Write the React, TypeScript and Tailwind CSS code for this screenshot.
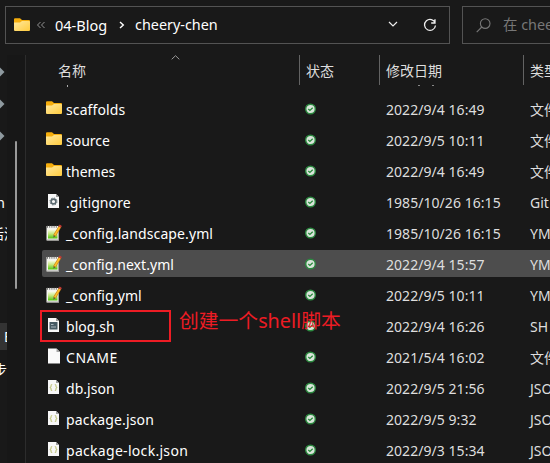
import React from "react";

type Kind = "folder" | "gear" | "note" | "shell" | "blank" | "json";

const files: [string, Kind, string, string, string?][] = [
  ["scaffolds", "folder", "2022/9/4 16:49", "文件夹", "tracking-[0.1px]"],
  ["source", "folder", "2022/9/5 10:11", "文件夹"],
  ["themes", "folder", "2022/9/4 16:49", "文件夹"],
  [".gitignore", "gear", "1985/10/26 16:15", "Git Ignore", "tracking-[0.1px]"],
  ["_config.landscape.yml", "note", "1985/10/26 16:15", "YML 文件", "tracking-[0.1px]"],
  ["_config.next.yml", "note", "2022/9/4 15:57", "YML 文件", "tracking-[0.05px]"],
  ["_config.yml", "note", "2022/9/5 10:11", "YML 文件", "tracking-[0.1px]"],
  ["blog.sh", "shell", "2022/9/4 16:26", "SH 文件", "tracking-[0.05px]"],
  ["CNAME", "blank", "2021/5/4 16:02", "文件", "tracking-[0.6px]"],
  ["db.json", "json", "2022/9/5 21:56", "JSON 文件", "tracking-[0.05px]"],
  ["package.json", "json", "2022/9/5 9:32", "JSON 文件", "tracking-[0.15px]"],
  ["package-lock.json", "json", "2022/9/3 15:34", "JSON 文件", "tracking-[0.3px]"],
];

function Folder() {
  return (
    <svg width="16" height="14" viewBox="0 0 16 14" className="block shrink-0">
      <defs>
        <linearGradient id="fold" x1="0" y1="0" x2="1" y2="1">
          <stop offset="0" stopColor="#ffe9a0" />
          <stop offset="1" stopColor="#ffcb3d" />
        </linearGradient>
      </defs>
      <path d="M0 1.2Q0 0.3 1 0.3H6L8 2H15Q16 2 16 3V8H0Z" fill="#f5ad0c" />
      <path d="M0 4.5H6L8 2.9H15Q16 2.9 16 3.7V12Q16 13 15 13H1Q0 13 0 12Z" fill="url(#fold)" />
    </svg>
  );
}

function Page({ kind }: { kind: Kind }) {
  return (
    <svg width="16" height="16" viewBox="0 0 16 16" className="block">
      {kind === "blank" ? (
        <>
          <path d="M2 0.5H10.5L14 4V15.5H2Z" fill="#fafafa" />
          <path d="M10.5 0.5V4H14Z" fill="#a5a5a5" />
        </>
      ) : (
        <>
          <path d="M2 1H10L13 4V15H2Z" fill="#f7f7f7" />
          <path d="M10 1V4H13Z" fill="#9c9c9c" />
        </>
      )}
      {kind === "gear" && (
        <>
          <circle cx="7.5" cy="8.5" r="2.4" fill="none" stroke="#5b6a70" strokeWidth="1.6" />
          <circle cx="7.5" cy="8.5" r="3.5" fill="none" stroke="#5b6a70" strokeWidth="1" strokeDasharray="1.3 1.45" />
        </>
      )}
      {kind === "shell" && (
        <>
          <rect x="3.5" y="5" width="8" height="7.5" fill="#465a64" />
          <path d="M5 7.5H7.5M5 10H10" stroke="#b5c3c9" strokeWidth="0.9" fill="none" />
        </>
      )}
      {kind === "json" && (
        <path
          d="M6.2 5.5Q5 5.5 5 6.8V7.6L4.2 8.5L5 9.4V10.2Q5 11.5 6.2 11.5M8.8 5.5Q10 5.5 10 6.8V7.6L10.8 8.5L10 9.4V10.2Q10 11.5 8.8 11.5"
          fill="none"
          stroke="#bfc47c"
          strokeWidth="1.1"
        />
      )}
    </svg>
  );
}

function Note() {
  return (
    <svg width="17" height="17" viewBox="0 0 17 17" className="block">
      <defs>
        <linearGradient id="leaf" x1="0" y1="0" x2="0" y2="1">
          <stop offset="0" stopColor="#fbfde8" />
          <stop offset="0.45" stopColor="#c5e882" />
          <stop offset="1" stopColor="#4fc40c" />
        </linearGradient>
      </defs>
      <path d="M0.5 2H13V16.5H0.5Z" fill="#f4f4ef" />
      <path d="M2 5.5H11.5V14.5H2Z" fill="url(#leaf)" />
      <path d="M1 2.8H13" stroke="#777" strokeWidth="2" strokeDasharray="1 1.2" />
      <path d="M12.5 3V16H1" stroke="#a3a3a0" strokeWidth="1" fill="none" />
      <path d="M8.3 12L14 2.5" stroke="#c78315" strokeWidth="2.8" />
      <path d="M8.6 11.5L14 2.5" stroke="#ffc12d" strokeWidth="1.5" />
      <path d="M13.7 3L14.8 1.2" stroke="#c23a36" strokeWidth="2.6" />
      <path d="M7.4 13.8L7.7 11.3L9.2 12.1Z" fill="#444" />
    </svg>
  );
}

function Status() {
  return (
    <svg width="12" height="12" viewBox="0 0 12 12" className="block">
      <circle cx="5.5" cy="6" r="4.8" fill="#d9e4da" stroke="#2c8a40" strokeWidth="1.4" />
      <path d="M3.3 6L4.9 7.4L7.7 4.8" fill="none" stroke="#278a3b" strokeWidth="1.3" />
    </svg>
  );
}

function Pin() {
  return (
    <svg width="5" height="10" viewBox="0 0 5 10" className="block">
      <path d="M0 0.5L4.5 5L0 9.5Z" fill="#8e999f" />
    </svg>
  );
}

export default function App() {
  return (
    <div className="relative h-[463px] w-[550px] overflow-hidden bg-[#191919] font-['Noto_Sans','Noto_Sans_CJK_SC',sans-serif] text-[14px] leading-[20px] whitespace-nowrap text-white">
      <div className="flex h-[55px] gap-3 pt-1.5 pl-[5px]">
        <div className="flex h-[38px] w-[445px] shrink-0 items-center border border-[#535353] pb-[1px] pl-2">
          <Folder />
          <svg width="10" height="8" viewBox="0 0 10 8" className="ml-[6px] shrink-0">
            <path d="M4.5 1L1.5 4L4.5 7M8.5 1L5.5 4L8.5 7" fill="none" stroke="#929292" strokeWidth="1" />
          </svg>
          <span className="ml-[9px] w-[55px] shrink-0 text-[14.5px]">04-Blog</span>
          <svg width="6" height="8" viewBox="0 0 6 8" className="ml-[9px] shrink-0">
            <path d="M1 1L4.3 4L1 7" fill="none" stroke="#fff" strokeWidth="1.4" />
          </svg>
          <span className="ml-[10px] w-[85px] shrink-0 text-[14.4px]">cheery-chen</span>
          <svg width="10" height="7" viewBox="0 0 10 7" className="ml-[168px] shrink-0">
            <path d="M1 1L5 5L9 1" fill="none" stroke="#eee" strokeWidth="1.2" />
          </svg>
          <svg width="14" height="14" viewBox="0 0 14 14" className="ml-[25px] shrink-0">
            <path d="M12.2 5A5.5 5.5 0 1 0 12.5 7.5M12 1.2V5H8.2" fill="none" stroke="#eee" strokeWidth="1.3" />
          </svg>
        </div>
        <div className="flex h-[38px] w-[120px] shrink-0 items-center border border-[#535353] pl-[13px]">
          <svg width="15" height="15" viewBox="0 0 15 15" className="shrink-0">
            <circle cx="9.2" cy="5.6" r="4.8" fill="none" stroke="#777" strokeWidth="1.1" />
            <path d="M5.8 9L0.7 14.2" stroke="#777" strokeWidth="1.1" />
          </svg>
          <span className="ml-[12px] text-[14.4px] text-[#777]">在 cheery-chen</span>
        </div>
      </div>
      <div className="flex h-[408px]">
        <aside className="flex w-[25px] shrink-0">
          <div className="flex w-[7px] shrink-0 flex-col overflow-hidden">
            <div className="mt-[12px]"><Pin /></div>
            <div className="mt-[22px]"><Pin /></div>
            <div className="mt-[22px]"><Pin /></div>
            <div className="mt-[52px] flex h-[20px] justify-end pr-[2px]"><span>n</span></div>
            <div className="mt-[11px] h-[20px]"><span className="-ml-[10px]">活测</span></div>
            <div className="mt-[79px] flex h-[27px] items-center bg-[#333] pl-[4px]"><span>Blog</span></div>
            <div className="mt-[10px] h-[20px]"><span className="-ml-[7px]">步</span></div>
          </div>
          <div className="w-[18px] bg-[#171717] pt-[86px] pl-[8px]">
            <div className="h-[148px] w-[2px] rounded bg-[#999]" />
          </div>
        </aside>
        <main className="w-[525px] shrink-0 border-l border-[#2c2c2c]">
          <div className="flex h-[30px] text-[#dedede]">
            <div className="relative w-[274px] shrink-0 border-r border-[#636363] pt-[6px] pl-[32px]">
              名称
              <svg width="9" height="5" viewBox="0 0 9 5" className="absolute top-0 left-[145px]">
                <path d="M0.7 4.3L4.5 0.7L8.3 4.3" fill="none" stroke="#999" strokeWidth="1" />
              </svg>
            </div>
            <div className="w-[80px] shrink-0 border-r border-[#636363] pt-[6px] pl-[6px]">状态</div>
            <div className="w-[144px] shrink-0 border-r border-[#636363] pt-[6px] pl-[6px]">修改日期</div>
            <div className="shrink-0 pt-[6px] pl-[6px]">类型</div>
          </div>
          <div className="flex h-[10px] items-start">
            <i className="ml-[41px] h-[2px] w-[1px] bg-[#aaa]" />
            <i className="ml-[350px] h-[1px] w-[2px] bg-[#888]" />
            <i className="ml-[12px] h-[1px] w-[2px] bg-[#888]" />
          </div>
          <div className="flex flex-col gap-1 pl-[16px]">
            {files.map(([name, kind, date, type, tracking], i) => (
              <div
                key={name}
                className={`flex h-[27px] items-center rounded-l-[2px] pl-1 ${i === 5 ? "bg-[#4d4d4d]" : ""}`}
              >
                <div className="w-[20px] shrink-0 pb-[1px]">
                  {kind === "folder" ? <Folder /> : kind === "note" ? <Note /> : <Page kind={kind} />}
                </div>
                <span className={`w-[239px] shrink-0 pt-[2px] ${tracking ?? ""}`}>{name}</span>
                <div className="w-[81px] shrink-0"><Status /></div>
                <span className="w-[144px] shrink-0 pt-[2px] tracking-[0.05px] text-[#dedede]">{date}</span>
                <span className="pt-[2px] text-[#dedede]">{type}</span>
              </div>
            ))}
          </div>
        </main>
      </div>
      <div className="absolute top-[310px] left-[40px] h-[32px] w-[131px] border-2 border-[#ed1c24]" />
      <div className="absolute top-[307px] left-[179px] text-[19.8px] leading-[28px] text-[#ed1c24]">创建一个shell脚本</div>
    </div>
  );
}
